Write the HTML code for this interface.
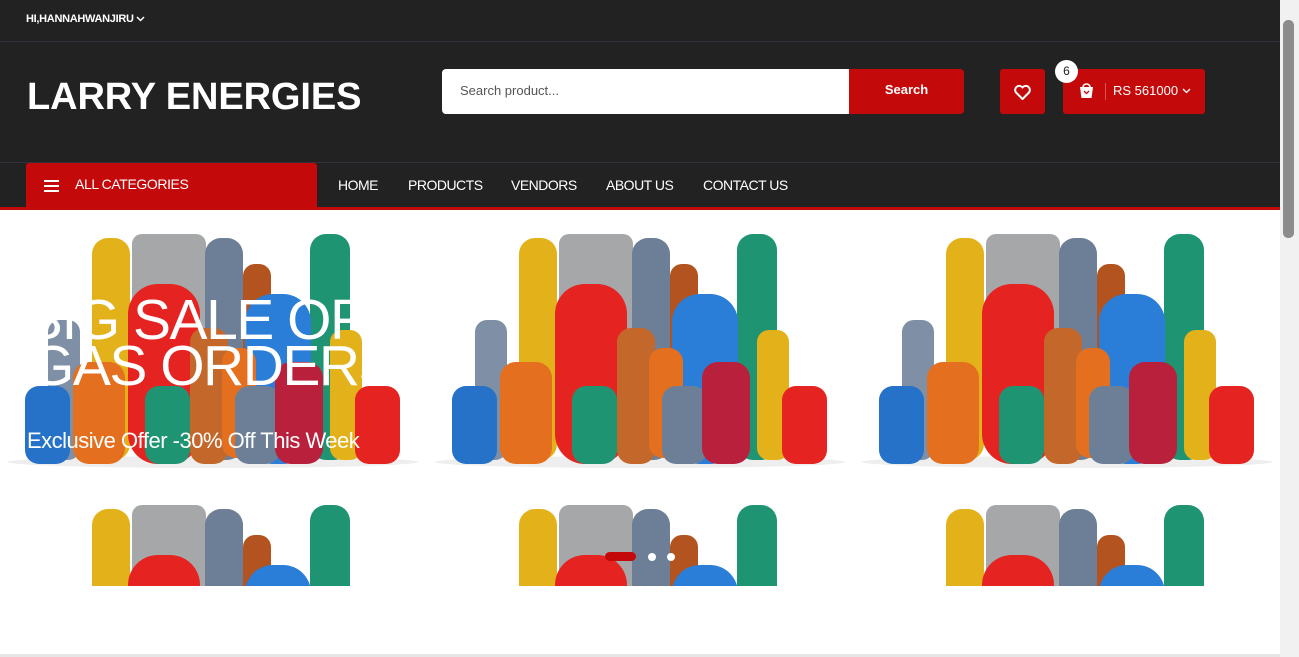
<!DOCTYPE html>
<html style="overflow:hidden"><head><meta charset="utf-8"><style>
*{margin:0;padding:0;box-sizing:border-box}
body{width:1299px;height:657px;overflow:hidden;background:#fff;font-family:"Liberation Sans",Arial,sans-serif;position:relative}
.dark{position:absolute;left:0;top:0;width:1280px;height:208px;background:#222}
.top{position:absolute;left:26px;top:13px;color:#fff;font-size:11px;font-weight:bold;letter-spacing:-0.3px}
.l1{position:absolute;left:0;top:41px;width:1280px;height:1px;background:#33323b}
.l2{position:absolute;left:0;top:162px;width:1280px;height:1px;background:#33323b}
.logo{position:absolute;left:27px;top:76px;color:#fff;font-size:38px;font-weight:bold;letter-spacing:-0.1px}
.search{position:absolute;left:442px;top:69px;width:408px;height:45px;background:#fff;border-radius:4px 0 0 4px;color:#555;font-size:13px;padding:14px 18px}
.sbtn{position:absolute;left:849px;top:69px;width:115px;height:45px;background:#c4090b;border-radius:0 4px 4px 0;color:#fff;font-size:13px;font-weight:bold;text-align:center;line-height:41px}
.heart{position:absolute;left:1000px;top:69px;width:45px;height:45px;background:#c4090b;border-radius:3px}
.cart{position:absolute;left:1063px;top:69px;width:142px;height:45px;background:#c4090b;border-radius:3px;color:#fff;font-size:13px}
.badge{position:absolute;left:1055px;top:60px;width:23px;height:23px;border-radius:50%;background:#fff;color:#222;font-size:12px;text-align:center;line-height:23px}
.cat{position:absolute;left:26px;top:163px;width:291px;height:45px;background:#c4090b;border-radius:3px 3px 0 0;color:#fff;font-size:14px;line-height:43px;padding-left:49px;letter-spacing:-0.4px}
.nav{position:absolute;top:177px;color:#fff;font-size:14px;letter-spacing:-0.5px}
.red{position:absolute;left:0;top:207px;width:1280px;height:3px;background:#c4090b}
.hero{position:absolute;left:0;top:210px;width:1280px;height:376px;overflow:hidden;background:#fff}
.ttl{position:absolute;left:27px;top:297px;width:340px;height:100px;overflow:hidden;color:#fff;font-size:57px;line-height:46px;white-space:nowrap;letter-spacing:-1.5px}
.sub{position:absolute;left:27px;top:428px;color:#fff;font-size:22px;letter-spacing:-0.5px}
.sb{position:absolute;left:1280px;top:0;width:19px;height:657px;background:#f1f1f1}
</style></head><body>
<div class="dark"></div>
<div class="top">HI,HANNAHWANJIRU <svg width="9" height="6" viewBox="0 0 9 6"><path d="M1 1l3.5 3.5L8 1" stroke="#fff" stroke-width="1.5" fill="none"/></svg></div>
<div class="l1"></div><div class="l2"></div>
<div class="logo">LARRY ENERGIES</div>
<div class="search">Search product...</div>
<div class="sbtn">Search</div>
<div class="heart"><svg width="45" height="45" viewBox="0 0 45 45"><path d="M22.5 30l-6.5-6.5a4 4 0 0 1 6.5-5 4 4 0 0 1 6.5 5z" stroke="#fff" stroke-width="2" fill="none" stroke-linejoin="round"/></svg></div>
<div class="cart"><svg style="position:absolute;left:15px;top:14px" width="17" height="17" viewBox="0 0 17 17"><path d="M2 4h13l-1.5 11h-10z" fill="#fff"/><path d="M5 4a3.5 3 0 0 1 7 0" stroke="#fff" stroke-width="1.5" fill="none"/><path d="M6 8l2.5 2.5L11 8" stroke="#c4090b" stroke-width="1.3" fill="none"/></svg><div style="position:absolute;left:42px;top:14px;width:1px;height:17px;background:#e05050"></div><span style="position:absolute;left:50px;top:14px">RS 561000</span><svg style="position:absolute;left:119px;top:19px" width="9" height="6" viewBox="0 0 9 6"><path d="M1 1l3.5 3.5L8 1" stroke="#fff" stroke-width="1.3" fill="none"/></svg></div>
<div class="badge">6</div>
<div class="cat"><svg style="position:absolute;left:18px;top:17px" width="15" height="12" viewBox="0 0 15 12"><path d="M0 1h15M0 6h15M0 11h15" stroke="#fff" stroke-width="2"/></svg>ALL CATEGORIES</div>
<div class="nav" style="left:338px">HOME</div>
<div class="nav" style="left:408px">PRODUCTS</div>
<div class="nav" style="left:511px">VENDORS</div>
<div class="nav" style="left:606px">ABOUT US</div>
<div class="nav" style="left:703px">CONTACT US</div>
<div class="red"></div>
<div class="hero">
<svg width="1280" height="376" viewBox="0 0 1280 376">
<defs>
<g id="t">
<ellipse cx="213" cy="252" rx="205" ry="6" fill="#eee"/>
<rect x="92" y="28" width="38" height="222" rx="16" fill="#e3b21a"/>
<rect x="132" y="24" width="74" height="130" rx="10" fill="#a5a7a8"/>
<rect x="205" y="28" width="38" height="222" rx="16" fill="#6d7f96"/>
<rect x="243" y="54" width="28" height="120" rx="12" fill="#b3531f"/>
<rect x="310" y="24" width="40" height="226" rx="16" fill="#1f9472"/>
<rect x="48" y="110" width="32" height="140" rx="12" fill="#7f8fa5"/>
<rect x="330" y="120" width="32" height="130" rx="12" fill="#e3b21a"/>
<rect x="128" y="74" width="72" height="180" rx="30" fill="#e52421"/>
<rect x="245" y="84" width="66" height="170" rx="28" fill="#2a7ed8"/>
<rect x="190" y="118" width="38" height="136" rx="14" fill="#c4672b"/>
<rect x="222" y="138" width="34" height="110" rx="14" fill="#e4701f"/>
<rect x="25" y="176" width="45" height="78" rx="14" fill="#2672c8"/>
<rect x="73" y="152" width="52" height="102" rx="16" fill="#e4701f"/>
<rect x="145" y="176" width="45" height="78" rx="14" fill="#1f9472"/>
<rect x="235" y="176" width="45" height="78" rx="14" fill="#6d7f96"/>
<rect x="275" y="152" width="48" height="102" rx="16" fill="#b8203c"/>
<rect x="355" y="176" width="45" height="78" rx="14" fill="#e52421"/>
</g>
</defs>
<use href="#t" x="0" y="0"/><use href="#t" x="427" y="0"/><use href="#t" x="854" y="0"/>
<use href="#t" x="0" y="271"/><use href="#t" x="427" y="271"/><use href="#t" x="854" y="271"/>
<rect x="605" y="342" width="31" height="9" rx="4.5" fill="#c4090b"/>
<circle cx="652" cy="347" r="4" fill="#fff"/><circle cx="671" cy="347" r="4" fill="#fff"/>
</svg>
</div>
<div class="ttl"><div style="margin-left:-2px">BIG SALE OF</div><div style="margin-left:3px">GAS ORDERS</div></div>
<div class="sub">Exclusive Offer -30% Off This Week</div>
<div style="position:absolute;left:0;top:654px;width:1280px;height:3px;background:#e6e6e6"></div>
<div class="sb"><div style="position:absolute;left:3px;top:20px;width:11px;height:218px;background:#8c8c8c;border-radius:5px"></div></div>
</body></html>
